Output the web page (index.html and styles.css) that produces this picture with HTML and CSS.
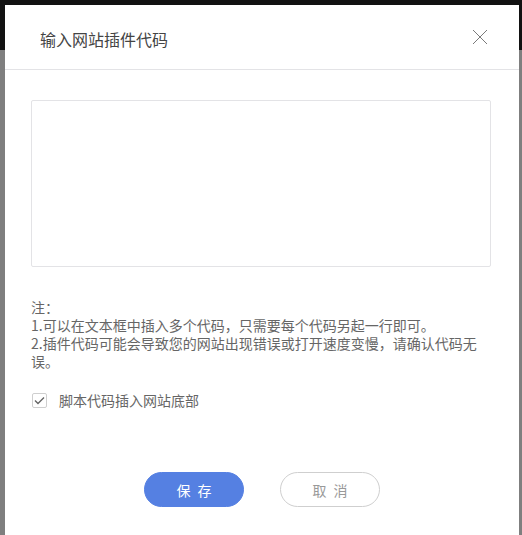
FILE: index.html
```html
<!DOCTYPE html>
<html lang="zh-CN">
<head>
<meta charset="utf-8">
<title>输入网站插件代码</title>
<link rel="stylesheet" href="styles.css">
</head>
<body>
<div class="page">
  <div class="modal">
    <div class="modal-header">
      <div class="modal-title">输入网站插件代码</div>
      <span class="close" aria-label="关闭">
        <svg width="16" height="16" viewBox="0 0 16 16"><path d="M1 1L15 15M15 1L1 15" stroke="#7a7a7a" stroke-width="1" fill="none"/></svg>
      </span>
    </div>
    <div class="modal-body">
      <textarea class="code-input"></textarea>
      <div class="notes">
        <p>注：</p>
        <p>1.可以在文本框中插入多个代码，只需要每个代码另起一行即可。</p>
        <p>2.插件代码可能会导致您的网站出现错误或打开速度变慢，请确认代码无误。</p>
      </div>
      <label class="check-row">
        <span class="checkbox">
          <svg width="11" height="9" viewBox="0 0 11 9"><path d="M1 4.5L4 7.5L10 1.5" stroke="#666" stroke-width="1.4" fill="none"/></svg>
        </span>
        <span class="check-label">脚本代码插入网站底部</span>
      </label>
      <div class="actions">
        <button class="btn btn-primary">保 存</button>
        <button class="btn btn-default">取 消</button>
      </div>
    </div>
  </div>
</div>
</body>
</html>
```

FILE: styles.css
```css
html, body {
  margin: 0;
  padding: 0;
  height: 100%;
  overflow: hidden;
}
body {
  background: linear-gradient(to bottom, #121212 0, #121212 50px, #7f7f7f 50px, #7f7f7f 100%);
  font-family: "Noto Sans CJK SC", "Noto Sans", sans-serif;
}
.page {
  padding: 5px 3px 0 5px;
}
.modal {
  background: #fff;
  width: 514px;
  height: 530px;
  overflow: hidden;
}
.modal-header {
  height: 64px;
  border-bottom: 1px solid #e3e3e6;
  display: flex;
  justify-content: space-between;
  align-items: flex-start;
  padding: 0 31px 0 35px;
}
.modal-title {
  margin-top: 22px;
  font-size: 16px;
  line-height: 24px;
  color: #444;
}
.close {
  margin-top: 24px;
  width: 16px;
  height: 16px;
  display: block;
}
.close svg { display: block; }
.modal-body {
  padding: 30px 28px 0 26px;
}
.code-input {
  display: block;
  box-sizing: border-box;
  width: 460px;
  height: 167px;
  border: 1px solid #e3e3e6;
  border-radius: 2px;
  resize: none;
  margin: 0;
  outline: none;
}
.notes {
  margin-top: 31px;
  font-size: 14px;
  line-height: 18px;
  color: #666;
}
.notes p {
  margin: 0;
}
.check-row {
  margin-top: 20px;
  display: flex;
  align-items: center;
  height: 20px;
  padding-left: 1px;
}
.checkbox {
  box-sizing: border-box;
  width: 15px;
  height: 15px;
  border: 1px solid #cfcfcf;
  border-radius: 2px;
  display: flex;
  align-items: center;
  justify-content: center;
}
.check-label {
  margin-left: 12px;
  font-size: 14px;
  color: #666;
}
.actions {
  margin-top: 62px;
  display: flex;
  justify-content: center;
  gap: 36px;
  padding-left: 2px;
}
.btn {
  box-sizing: border-box;
  width: 100px;
  height: 35px;
  border-radius: 18px;
  font-family: "Noto Sans CJK SC", "Noto Sans", sans-serif;
  font-size: 14px;
  letter-spacing: 2px;
  text-indent: 2px;
  cursor: pointer;
  padding: 0;
}
.btn-primary {
  background: #5580e2;
  border: 1px solid #5580e2;
  color: #fff;
}
.btn-default {
  background: #fff;
  border: 1px solid #cfcfcf;
  color: #999;
}
```
